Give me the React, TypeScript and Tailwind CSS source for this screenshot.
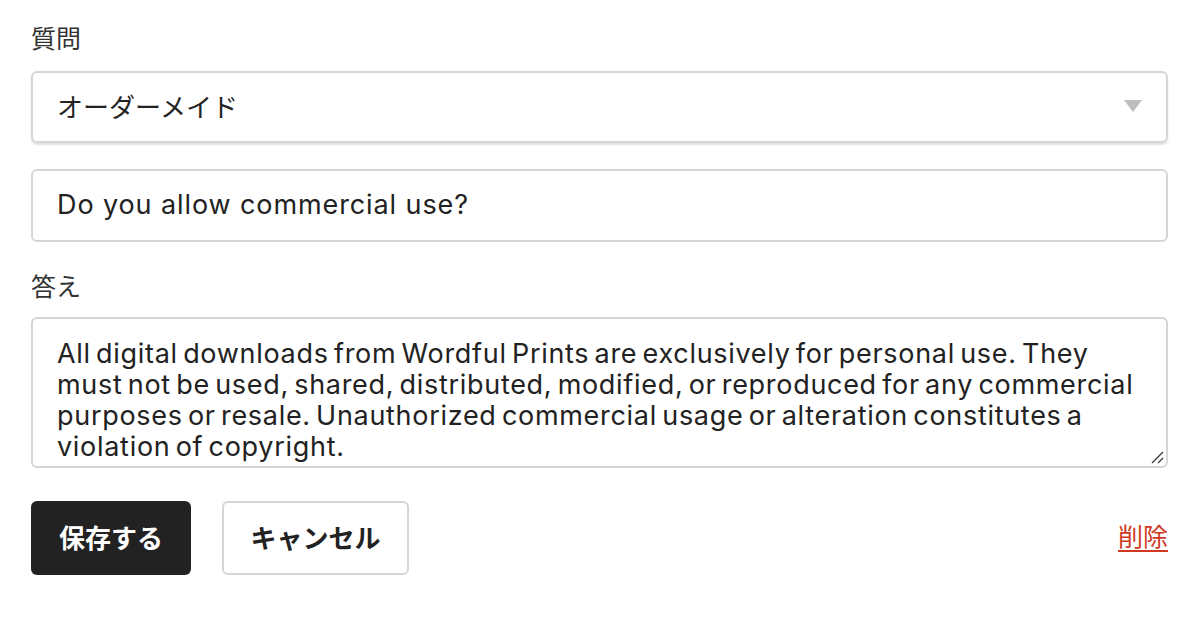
export default function App() {
  const font = { fontFamily: 'Inter, "Noto Sans CJK JP", sans-serif' };
  return (
    <div className="w-[1200px] h-[618px] bg-white text-[#222222]" style={font}>
      <div className="pl-[31px] pr-[32px] pt-[20px] flex flex-col">
        <label className="text-[25px] leading-[38px] text-[#333333]">質問</label>
        <div className="mt-[13px] h-[72px] border-2 border-[#d6d6d6] rounded-[6px] shadow-[0_2px_2px_rgba(0,0,0,0.12)] flex items-center justify-between pl-[24px] pr-[24px]">
          <span className="text-[26px] text-[#222222]">オーダーメイド</span>
          <svg width="18" height="13" viewBox="0 0 18 13" className="mt-[-2px]">
            <polygon points="0,0 18,0 9,12" fill="#bdbdbd" />
          </svg>
        </div>
        <div className="mt-[26px] h-[73px] border-2 border-[#d6d6d6] rounded-[6px] flex items-center pl-[24px]">
          <span className="text-[27px] tracking-[0.9px]">Do you allow commercial use?</span>
        </div>
        <label className="mt-[26px] text-[25px] leading-[38px] text-[#333333]">答え</label>
        <div className="relative mt-[11px] h-[151px] border-2 border-[#d6d6d6] rounded-[6px] pl-[24px] pr-[16px] pt-[19px]">
          <p className="text-[27px] leading-[31px] tracking-[0.7px] [word-spacing:-3px]">
            All digital downloads from Wordful Prints are exclusively for personal use. They must not be used, shared, distributed, modified, or reproduced for any commercial purposes or resale. Unauthorized commercial usage or alteration constitutes a violation of copyright.
          </p>
          <svg width="14" height="14" viewBox="0 0 14 14" className="absolute right-[2px] bottom-[2px]">
            <line x1="2" y1="13" x2="13" y2="2" stroke="#444" strokeWidth="1.5" />
            <line x1="8" y1="13" x2="13" y2="8" stroke="#444" strokeWidth="1.5" />
          </svg>
        </div>
        <div className="mt-[33px] flex items-center">
          <button className="h-[74px] w-[160px] bg-[#222222] rounded-[6px] text-white text-[26px] font-bold">
            保存する
          </button>
          <button className="ml-[31px] h-[74px] w-[187px] bg-white border-2 border-[#d6d6d6] rounded-[6px] text-[#222222] text-[26px] font-bold">
            キャンセル
          </button>
          <a className="ml-auto text-[25px] text-[#d0391f] underline underline-offset-[4px]">削除</a>
        </div>
      </div>
    </div>
  );
}
